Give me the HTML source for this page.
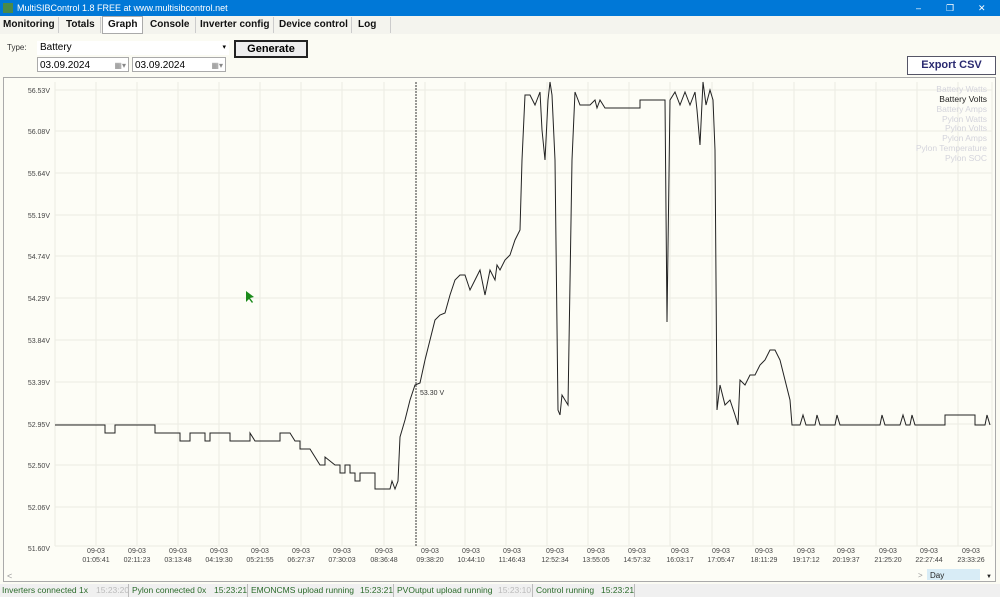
<!DOCTYPE html><html><head><style>
body{margin:0;width:1000px;height:597px;background:#f0f0f0;font-family:"Liberation Sans",sans-serif;position:relative;overflow:hidden}
.a{position:absolute}
.tab{position:absolute;top:17px;height:16px;font-size:10px;font-weight:bold;color:#111;border-right:1px solid #ccc;line-height:16px;white-space:nowrap;padding-left:2px}
</style></head><body>
<div class="a" style="left:0;top:0;width:1000px;height:16px;background:#0078d7;color:#fff;font-size:9px;line-height:16px">
<span style="display:inline-block;width:10px;height:10px;background:#4a8a4a;margin:3px 4px 0 3px;vertical-align:top"></span>MultiSIBControl 1.8 FREE at www.multisibcontrol.net
<span class="a" style="left:916px;top:0">–</span><span class="a" style="left:946px;top:0">❐</span><span class="a" style="left:978px;top:0">✕</span></div>
<div class="a" style="left:0;top:16px;width:1000px;height:18px;background:#f4f4ee"></div>
<div class="tab" style="left:1px;width:55px">Monitoring</div>
<div class="tab" style="left:64px;width:34px">Totals</div>
<div class="tab" style="left:102px;width:34px;border:1px solid #aaa;background:#fff;padding-left:5px;top:16px">Graph</div>
<div class="tab" style="left:148px;width:45px">Console</div>
<div class="tab" style="left:198px;width:73px">Inverter config</div>
<div class="tab" style="left:277px;width:72px">Device control</div>
<div class="tab" style="left:356px;width:32px">Log</div>
<div class="a" style="left:0;top:34px;width:1000px;height:550px;background:#fbfbf3"></div>
<div class="a" style="left:7px;top:43px;font-size:8px;color:#333">Type:</div>
<div class="a" style="left:37px;top:41px;width:189px;height:14px;background:#fff;font-size:10px;line-height:14px;padding-left:3px">Battery<span style="position:absolute;right:3px;font-size:7px">▾</span></div>
<div class="a" style="left:37px;top:57px;width:92px;height:15px;background:#fff;border:1px solid #aaa;font-size:10px;line-height:15px;padding-left:2px;box-sizing:border-box">03.09.2024<span style="position:absolute;right:2px;color:#888;font-size:8px">▦▾</span></div>
<div class="a" style="left:132px;top:57px;width:94px;height:15px;background:#fff;border:1px solid #aaa;font-size:10px;line-height:15px;padding-left:2px;box-sizing:border-box">03.09.2024<span style="position:absolute;right:2px;color:#888;font-size:8px">▦▾</span></div>
<div class="a" style="left:234px;top:40px;width:74px;height:18px;border:2px solid #222;box-sizing:border-box;background:#eee;font-size:11px;font-weight:bold;text-align:center;line-height:14px">Generate</div>
<div class="a" style="left:907px;top:56px;width:89px;height:19px;border:1px solid #556;box-sizing:border-box;background:#fff;font-size:11px;font-weight:bold;color:#2a2a70;text-align:center;line-height:17px">Export CSV</div>
<div class="a" style="left:3px;top:77px;width:993px;height:505px;border:1px solid #aaa;box-sizing:border-box;background:#fdfdf6"></div>
<svg class="a" style="left:0;top:0" width="1000" height="597" font-family="Liberation Sans" font-size="7">
<g stroke="#ebebe3" stroke-width="1">
<line x1="55" y1="90" x2="992" y2="90"/><line x1="55" y1="131" x2="992" y2="131"/><line x1="55" y1="173" x2="992" y2="173"/><line x1="55" y1="215" x2="992" y2="215"/><line x1="55" y1="256" x2="992" y2="256"/><line x1="55" y1="298" x2="992" y2="298"/><line x1="55" y1="340" x2="992" y2="340"/><line x1="55" y1="382" x2="992" y2="382"/><line x1="55" y1="424" x2="992" y2="424"/><line x1="55" y1="465" x2="992" y2="465"/><line x1="55" y1="507" x2="992" y2="507"/><line x1="55" y1="546" x2="992" y2="546"/>
<line x1="55" y1="82" x2="55" y2="546"/><line x1="992" y1="82" x2="992" y2="546"/>
<line x1="96" y1="82" x2="96" y2="546"/><line x1="137" y1="82" x2="137" y2="546"/><line x1="178" y1="82" x2="178" y2="546"/><line x1="219" y1="82" x2="219" y2="546"/><line x1="260" y1="82" x2="260" y2="546"/><line x1="301" y1="82" x2="301" y2="546"/><line x1="342" y1="82" x2="342" y2="546"/><line x1="384" y1="82" x2="384" y2="546"/><line x1="425" y1="82" x2="425" y2="546"/><line x1="465" y1="82" x2="465" y2="546"/><line x1="506" y1="82" x2="506" y2="546"/><line x1="547" y1="82" x2="547" y2="546"/><line x1="588" y1="82" x2="588" y2="546"/><line x1="629" y1="82" x2="629" y2="546"/><line x1="670" y1="82" x2="670" y2="546"/><line x1="712" y1="82" x2="712" y2="546"/><line x1="753" y1="82" x2="753" y2="546"/><line x1="794" y1="82" x2="794" y2="546"/><line x1="835" y1="82" x2="835" y2="546"/><line x1="876" y1="82" x2="876" y2="546"/><line x1="917" y1="82" x2="917" y2="546"/><line x1="958" y1="82" x2="958" y2="546"/>
</g>
<g fill="#444" text-anchor="end"><text x="50" y="93">56.53V</text><text x="50" y="134">56.08V</text><text x="50" y="176">55.64V</text><text x="50" y="218">55.19V</text><text x="50" y="259">54.74V</text><text x="50" y="301">54.29V</text><text x="50" y="343">53.84V</text><text x="50" y="385">53.39V</text><text x="50" y="427">52.95V</text><text x="50" y="468">52.50V</text><text x="50" y="510">52.06V</text><text x="50" y="551">51.60V</text></g>
<g fill="#444" text-anchor="middle">
<text x="96" y="553">09-03</text><text x="96" y="562">01:05:41</text>
<text x="137" y="553">09-03</text><text x="137" y="562">02:11:23</text>
<text x="178" y="553">09-03</text><text x="178" y="562">03:13:48</text>
<text x="219" y="553">09-03</text><text x="219" y="562">04:19:30</text>
<text x="260" y="553">09-03</text><text x="260" y="562">05:21:55</text>
<text x="301" y="553">09-03</text><text x="301" y="562">06:27:37</text>
<text x="342" y="553">09-03</text><text x="342" y="562">07:30:03</text>
<text x="384" y="553">09-03</text><text x="384" y="562">08:36:48</text>
<text x="430" y="553">09-03</text><text x="430" y="562">09:38:20</text>
<text x="471" y="553">09-03</text><text x="471" y="562">10:44:10</text>
<text x="512" y="553">09-03</text><text x="512" y="562">11:46:43</text>
<text x="555" y="553">09-03</text><text x="555" y="562">12:52:34</text>
<text x="596" y="553">09-03</text><text x="596" y="562">13:55:05</text>
<text x="637" y="553">09-03</text><text x="637" y="562">14:57:32</text>
<text x="680" y="553">09-03</text><text x="680" y="562">16:03:17</text>
<text x="721" y="553">09-03</text><text x="721" y="562">17:05:47</text>
<text x="764" y="553">09-03</text><text x="764" y="562">18:11:29</text>
<text x="806" y="553">09-03</text><text x="806" y="562">19:17:12</text>
<text x="846" y="553">09-03</text><text x="846" y="562">20:19:37</text>
<text x="888" y="553">09-03</text><text x="888" y="562">21:25:20</text>
<text x="929" y="553">09-03</text><text x="929" y="562">22:27:44</text>
<text x="971" y="553">09-03</text><text x="971" y="562">23:33:26</text></g>
<line x1="416" y1="82" x2="416" y2="546" stroke="#333" stroke-dasharray="2,1"/>
<text x="420" y="395" fill="#333">53.30 V</text>
<polyline fill="none" stroke="#222" stroke-width="1" points="55,425 105,425 105,433 115,433 115,425 155,425 155,433 180,433 180,441 190,441 190,433 205,433 205,441 210,441 210,433 230,433 230,441 250,441 250,433 255,441 280,441 280,433 290,433 295,441 300,441 300,449 310,449 315,457 320,465 325,465 325,457 335,465 340,465 340,473 345,473 345,465 350,465 350,473 355,473 355,481 360,481 360,473 375,473 375,489 390,489 392,481 395,489 398,481 400,437 405,420 410,400 415,385 420,383 425,360 430,340 435,320 440,315 445,313 450,295 455,280 460,275 465,275 470,290 475,280 480,270 485,295 490,270 495,280 497,265 500,270 505,260 510,255 515,240 520,230 522,160 525,95 530,95 535,105 540,92 542,130 545,160 548,100 550,82 552,95 555,160 558,410 560,415 562,395 568,405 572,160 575,92 580,105 590,105 595,100 597,108 600,100 605,108 640,108 640,100 665,100 667,322 670,100 675,92 680,105 685,92 690,105 695,92 697,110 700,145 703,82 706,105 710,90 713,100 715,150 717,410 720,385 725,405 730,400 735,415 738,425 740,380 745,385 750,375 755,375 760,365 765,360 770,350 775,350 780,360 785,380 790,400 792,425 800,425 803,415 806,425 815,425 817,415 820,425 835,425 837,415 840,425 880,425 882,415 885,425 900,425 903,415 906,425 910,425 912,415 915,425 945,425 945,415 975,415 975,425 985,425 987,415 990,425"/>
<polygon points="246,291 246,302 249,299 252,303 253,302 250,298 254,297" fill="#1a8a1a"/>
<g text-anchor="end" font-size="8.5" fill="#d4d4dc"><text x="987" y="92">Battery Watts</text><text x="987" y="102" fill="#222">Battery Volts</text><text x="987" y="112">Battery Amps</text><text x="987" y="122">Pylon Watts</text><text x="987" y="131">Pylon Volts</text><text x="987" y="141">Pylon Amps</text><text x="987" y="151">Pylon Temperature</text><text x="987" y="161">Pylon SOC</text></g>
<text x="7" y="579" fill="#999" font-size="9">&lt;</text><text x="918" y="578" fill="#999" font-size="8">&gt;</text>
<rect x="927" y="569" width="53" height="11" fill="#d8ecf6"/><text x="930" y="578" fill="#222" font-size="8">Day</text><text x="986" y="578" font-size="6" fill="#222">▼</text>
</svg>
<div class="a" style="left:0;top:584px;width:1000px;height:13px;background:#f0f0f0;font-size:8.5px;line-height:13px;color:#2a6a2a;white-space:nowrap">
<span style="position:absolute;left:2px">Inverters connected 1x</span><span style="position:absolute;left:96px;color:#bbb">15:23:20</span>
<span style="position:absolute;left:128px;border-left:1px solid #bbb;padding-left:3px">Pylon connected 0x</span><span style="position:absolute;left:214px">15:23:21</span>
<span style="position:absolute;left:247px;border-left:1px solid #bbb;padding-left:3px">EMONCMS upload running</span><span style="position:absolute;left:360px">15:23:21</span>
<span style="position:absolute;left:393px;border-left:1px solid #bbb;padding-left:3px">PVOutput upload running</span><span style="position:absolute;left:498px;color:#bbb">15:23:10</span>
<span style="position:absolute;left:532px;border-left:1px solid #bbb;padding-left:3px">Control running</span><span style="position:absolute;left:601px">15:23:21</span>
<span style="position:absolute;left:634px;border-left:1px solid #bbb;height:13px"></span></div>
</body></html>
